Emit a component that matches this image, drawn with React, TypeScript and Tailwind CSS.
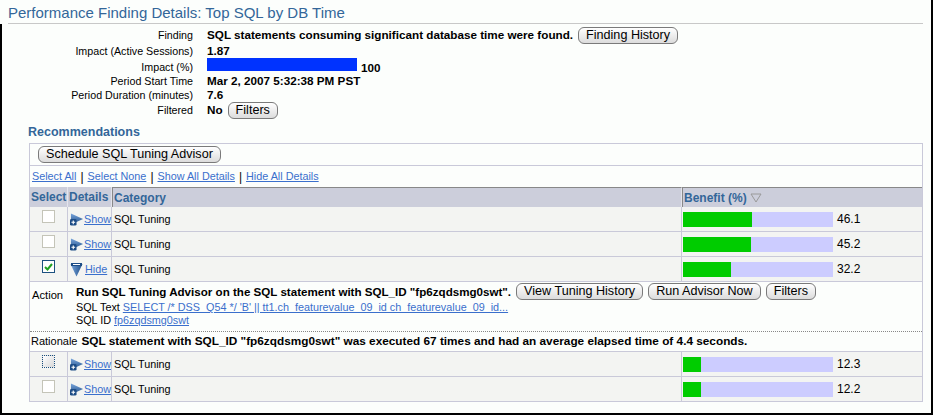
import React from "react";

const font = { fontFamily: '"Liberation Sans", Arial, sans-serif' };

const Btn = ({ children }: { children: React.ReactNode }) => (
  <span className="inline-flex items-center h-[17px] px-[7px] rounded-[6px] border border-[#7a7a7a] bg-gradient-to-b from-white to-[#dcdcdc] text-[12.6px] font-normal text-black leading-none whitespace-nowrap">
    {children}
  </span>
);

const Link = ({ children }: { children: React.ReactNode }) => (
  <span className="text-[#3a6fcc] underline">{children}</span>
);

const ShowIcon = () => (
  <svg width="14" height="14" viewBox="0 0 15 14" className="shrink-0">
    <defs>
      <linearGradient id="tri" x1="0" y1="0" x2="0" y2="1">
        <stop offset="0" stopColor="#7aa6dc" />
        <stop offset="1" stopColor="#1c4c86" />
      </linearGradient>
    </defs>
    <polygon points="1,1 14,7 1,13" fill="url(#tri)" />
    <rect x="0" y="7" width="7" height="7" rx="1.5" fill="#1c4c86" />
    <path d="M1.5 10.5h4M3.5 8.5v4" stroke="white" strokeWidth="1.2" />
  </svg>
);

const HideIcon = () => (
  <svg width="13" height="15" viewBox="0 0 13 15" className="shrink-0">
    <defs>
      <linearGradient id="tri2" x1="0" y1="0" x2="1" y2="0">
        <stop offset="0" stopColor="#7aa6dc" />
        <stop offset="1" stopColor="#1c4c86" />
      </linearGradient>
    </defs>
    <polygon points="0.5,2 12.5,2 6.5,14.5" fill="url(#tri2)" />
    <rect x="1" y="1" width="11" height="3" fill="#1c4c86" />
    <path d="M3 2.5h7" stroke="white" strokeWidth="1" />
  </svg>
);

const Checkbox = ({ checked, focus }: { checked?: boolean; focus?: boolean }) => (
  <span
    className={
      "inline-flex items-center justify-center w-[13px] h-[13px] " +
      (checked
        ? "border border-[#1c5180] bg-white"
        : focus
        ? "border border-dotted border-[#1c5180] bg-gradient-to-br from-white to-[#d8d8d8]"
        : "border border-[#c4c4b8] bg-white")
    }
  >
    {checked && (
      <svg width="9" height="8" viewBox="0 0 9 8">
        <path d="M1 4l2.5 2.5L8 1" stroke="#21a121" strokeWidth="2" fill="none" />
      </svg>
    )}
  </span>
);

const Bar = ({ value }: { value: number }) => (
  <div className="flex items-center">
    <div className="w-[150px] h-[15px] bg-[#ccccff]">
      <div className="h-full bg-[#00cc00]" style={{ width: `${value * 1.5}px` }} />
    </div>
    <span className="ml-[4px] text-[12px]">{value.toFixed(1)}</span>
  </div>
);

const cols = "grid grid-cols-[38px_44px_570px_1fr]";

const Row = ({ value, checked, focus, hide }: { value: number; checked?: boolean; focus?: boolean; hide?: boolean }) => (
  <div className={cols + " h-[25px] bg-[#f3f4f2] border-b border-[#c9c9d9] text-[10.8px]"}>
    <div className="flex justify-center pt-[3px] border-r border-[#c9c9d9]">
      <Checkbox checked={checked} focus={focus} />
    </div>
    <div className="flex items-center pl-[2px] border-r border-[#c9c9d9] text-[10.8px]">
      {hide ? <HideIcon /> : <ShowIcon />}
      <span className={hide ? "ml-[2px]" : ""}>
        <Link>{hide ? "Hide" : "Show"}</Link>
      </span>
    </div>
    <div className="flex items-center pl-[2px] border-r border-[#c9c9d9]">SQL Tuning</div>
    <div className="flex items-center pl-[1px]">
      <Bar value={value} />
    </div>
  </div>
);

const Label = ({ children }: { children: React.ReactNode }) => (
  <div className="text-right">{children}</div>
);

export default function App() {
  return (
    <div className="w-[933px] h-[415px] bg-[#fcfefc] text-black flex flex-col" style={font}>
      <div className="flex flex-col flex-1 border-r-2 border-black">
        <div className="pl-[8px] pt-[4px] pr-[8px]">
          <div className="text-[15px] text-[#336699] leading-[18px] pb-[1px] border-b border-[#c8c8c8]">
            Performance Finding Details: Top SQL by DB Time
          </div>
        </div>
        <div className="flex-1 border-l-2 border-b-2 border-black pt-[2px]">
          <div className="grid grid-cols-[191px_1fr] gap-x-[14px] text-[10.7px] leading-[14px]">
            <Label>
              <div className="pt-[2px]">Finding</div>
            </Label>
            <div className="flex items-center gap-[5px] font-bold text-[11.7px] h-[18px]">
              SQL statements consuming significant database time were found.
              <Btn>Finding History</Btn>
            </div>
            <Label>Impact (Active Sessions)</Label>
            <div className="font-bold text-[11.7px]">1.87</div>
            <Label>
              <div className="pt-[2px]">Impact (%)</div>
            </Label>
            <div className="flex items-end h-[16px] font-bold text-[11.7px]">
              <div className="w-[150px] h-[13px] bg-[#0033ff] self-start" />
              <span className="ml-[4px] leading-[12px]">100</span>
            </div>
            <Label>Period Start Time</Label>
            <div className="font-bold text-[11.7px]">Mar 2, 2007 5:32:38 PM PST</div>
            <Label>Period Duration (minutes)</Label>
            <div className="font-bold text-[11.7px]">7.6</div>
            <Label>
              <div className="pt-[1px]">Filtered</div>
            </Label>
            <div className="flex items-center gap-[5px] font-bold text-[11.7px] h-[16px]">
              No
              <Btn>Filters</Btn>
            </div>
          </div>

          <div className="pl-[26px] pt-[6px] text-[12.5px] font-bold text-[#336699] leading-[16px]">
            Recommendations
          </div>

          <div className="ml-[27px] mr-[8px] mt-[3px] border border-[#c9c9d9] border-b-0">
            <div className="h-[22px] flex items-center pl-[8px] border-b border-[#c9c9d9]">
              <Btn>Schedule SQL Tuning Advisor</Btn>
            </div>
            <div className="h-[21px] flex items-center pl-[2px] text-[10.8px]">
              <Link>Select All</Link>
              <span className="mx-[4px] text-[12px]">|</span>
              <Link>Select None</Link>
              <span className="mx-[4px] text-[12px]">|</span>
              <Link>Show All Details</Link>
              <span className="mx-[4px] text-[12px]">|</span>
              <Link>Hide All Details</Link>
            </div>
            <div className={cols + " h-[20px] bg-[#cccedb] text-[12px] font-bold text-[#336699]"}>
              <div className="flex items-center pl-[1px] border-r border-[#e4e4ec]">Select</div>
              <div className="flex items-center pl-[1px] border-r border-[#e4e4ec]">Details</div>
              <div className="flex items-center pl-[1px] border-l border-t border-[#888] border-r border-r-[#e4e4ec]">Category</div>
              <div className="flex items-center pl-[1px] border-l border-t border-[#888]">
                Benefit (%)
                <svg width="12" height="10" viewBox="0 0 12 10" className="ml-[3px]">
                  <polygon points="1,1 11,1 6,9" fill="none" stroke="#9a9a9a" />
                </svg>
              </div>
            </div>
            <Row value={46.1} />
            <Row value={45.2} />
            <Row value={32.2} checked hide />
            <div className="text-[10.8px]">
              <div className="flex items-start pt-[1px]">
                <div className="w-[46px] pl-[2px] pt-[4px] text-[11.2px]">Action</div>
                <div className="flex flex-col">
                  <div className="flex items-center gap-[5px] h-[17px]">
                    <span className="font-bold text-[11.6px]">
                      Run SQL Tuning Advisor on the SQL statement with SQL_ID "fp6zqdsmg0swt".
                    </span>
                    <Btn>View Tuning History</Btn>
                    <Btn>Run Advisor Now</Btn>
                    <Btn>Filters</Btn>
                  </div>
                  <div className="leading-[13px] mt-[1px]">
                    SQL Text <Link>SELECT /* DSS_Q54 */ 'B' || tt1.ch_featurevalue_09_id ch_featurevalue_09_id...</Link>
                  </div>
                  <div className="leading-[13px]">
                    SQL ID <Link>fp6zqdsmg0swt</Link>
                  </div>
                </div>
              </div>
              <div className="mt-[4px] border-t border-dotted border-[#888]" />
              <div className="flex items-center h-[20px] pl-[1px] border-b border-[#c9c9d9] text-[11px]">
                Rationale
                <span className="font-bold ml-[4px] text-[11.8px]">
                  SQL statement with SQL_ID "fp6zqdsmg0swt" was executed 67 times and had an average elapsed time of 4.4 seconds.
                </span>
              </div>
            </div>
            <Row value={12.3} focus />
            <Row value={12.2} />
          </div>
        </div>
      </div>
    </div>
  );
}
